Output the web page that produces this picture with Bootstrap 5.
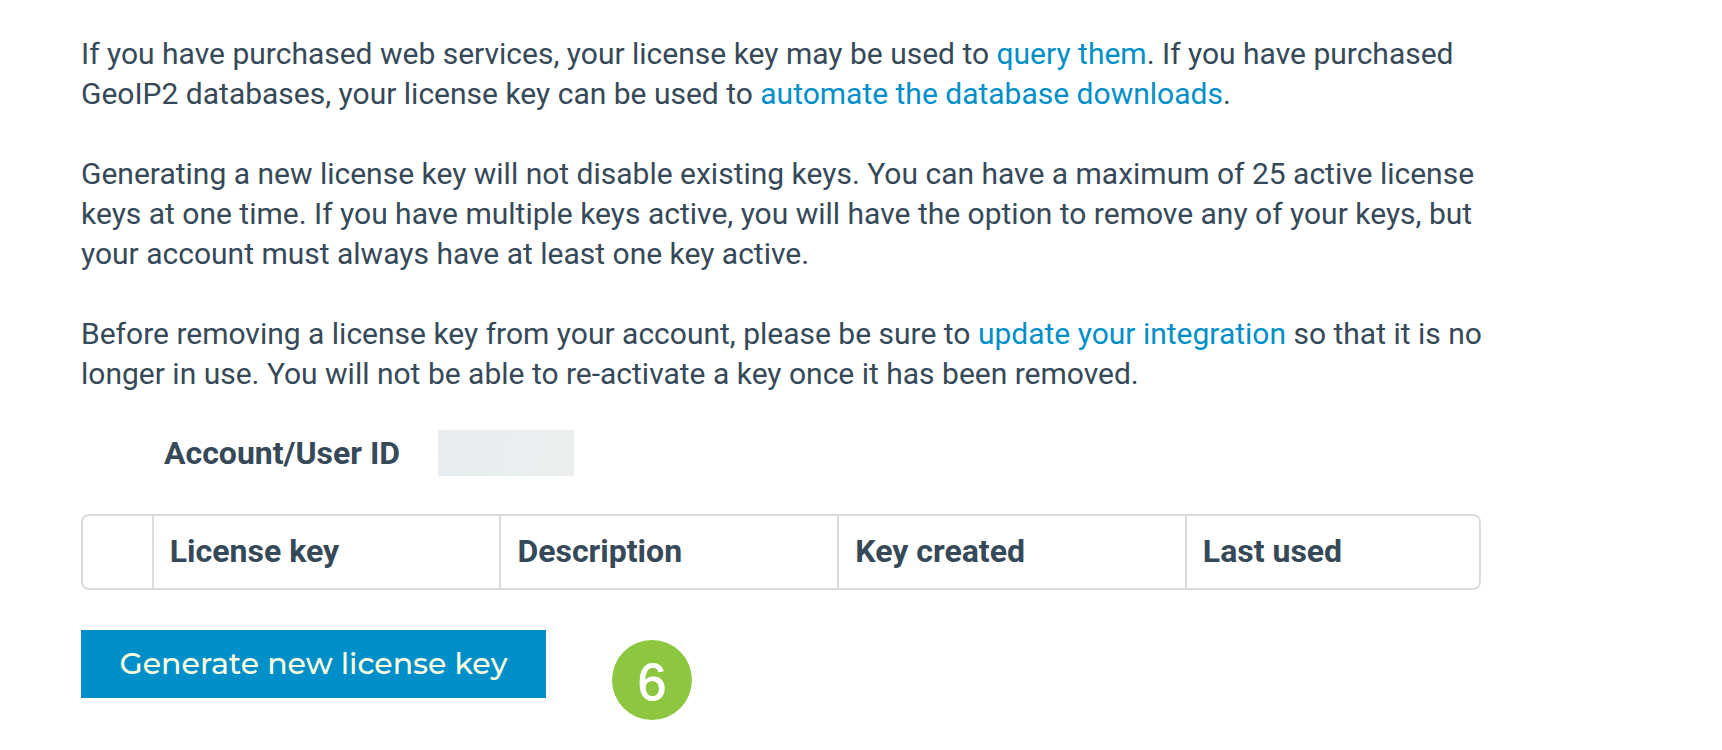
<!DOCTYPE html>
<html lang="en">
<head>
<meta charset="utf-8">
<meta name="viewport" content="width=device-width, initial-scale=1">
<title>License keys</title>
<link href="https://cdn.jsdelivr.net/npm/bootstrap@5.3.0/dist/css/bootstrap.min.css" rel="stylesheet">
<style>
  body { font-family: Roboto, sans-serif; font-size: 30px; line-height: 40px; color: #364958; background: #fff; }
  .license-page { max-width: 1485px; padding: 34px 4px 30px 81px; }
  .license-page p { margin: 0 -4px 40px 0; }
  .license-page p a { color: #008fc9; text-decoration: none; }
  .license-page .account-row { gap: 38px; padding-left: 83px; margin: 36px 0 38px; font-size: 32px; }
  .account-value { width: 136px; height: 46px; background: linear-gradient(100deg, #e8edf1, #ebefef); }
  .key-frame { border: 2px solid #dcdcdc; border-radius: 8px; margin-bottom: 40px; overflow: hidden; }
  .key-table { table-layout: fixed; color: inherit; font-size: 32px; }
  .key-table td, .key-table th { height: 72px; padding: 0 16px 2px; border: 0; vertical-align: middle; color: inherit; }
  .key-table th { border-left: 2px solid #dcdcdc; }
  .col-pick { width: 5%; }
  .col-key, .col-made { width: 24.9%; }
  .col-desc { width: 24.2%; }
  .action-row { gap: 66px; }
  .btn-generate { --bs-btn-color: #ffffe0; --bs-btn-bg: #008fc9; --bs-btn-hover-color: #ffffe0; --bs-btn-hover-bg: #007bad; width: 465px; height: 68px; padding: 0; font-family: Montserrat, Inter, sans-serif; font-size: 30px; font-weight: 500; line-height: 40px; }
  .step-marker { width: 80px; height: 80px; margin-top: 10px; padding-top: 4px; background: #8dc63f; font-family: "Liberation Sans", sans-serif; font-size: 52px; -webkit-text-stroke: 1px #fff; }
</style>
</head>
<body>
<main class="license-page">
  <p>If you have purchased web services, your license key may be used to <a href="#">query them</a>. If you have purchased GeoIP2 databases, your license key can be used to <a href="#">automate the database downloads</a>.</p>
  <p>Generating a new license key will not disable existing keys. You can have a maximum of 25 active license keys at one time. If you have multiple keys active, you will have the option to remove any of your keys, but your account must always have at least one key active.</p>
  <p class="mb-0">Before removing a license key from your account, please be sure to <a href="#">update your integration</a> so that it is no longer in use. You will not be able to re-activate a key once it has been removed.</p>
  <div class="account-row d-flex align-items-center">
    <span class="fw-bold">Account/User ID</span>
    <span class="account-value"></span>
  </div>
  <div class="key-frame">
    <table class="key-table table mb-0">
      <colgroup><col class="col-pick"><col class="col-key"><col class="col-desc"><col class="col-made"><col></colgroup>
      <thead>
        <tr><td></td><th scope="col">License key</th><th scope="col">Description</th><th scope="col">Key created</th><th scope="col">Last used</th></tr>
      </thead>
    </table>
  </div>
  <div class="action-row d-flex align-items-start">
    <button type="button" class="btn btn-generate border-0 rounded-0">Generate new license key</button>
    <span class="step-marker d-flex align-items-center justify-content-center rounded-circle text-white">6</span>
  </div>
</main>
<script src="https://cdn.jsdelivr.net/npm/bootstrap@5.3.0/dist/js/bootstrap.bundle.min.js"></script>
</body>
</html>
